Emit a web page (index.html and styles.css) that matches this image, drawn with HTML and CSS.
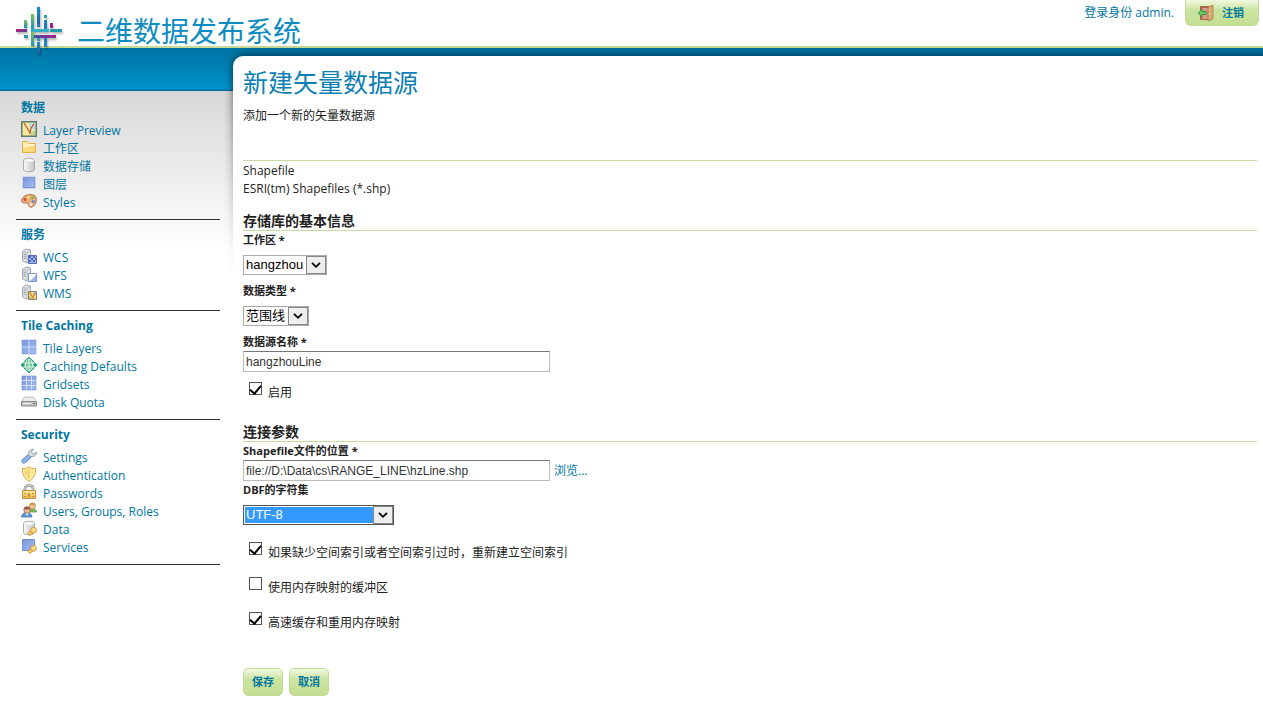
FILE: index.html
```html
<!DOCTYPE html>
<html lang="zh-CN">
<head>
<meta charset="utf-8">
<title>二维数据发布系统</title>
<link rel="stylesheet" href="styles.css">
</head>
<body>
<svg class="defs" width="0" height="0" aria-hidden="true">
  <defs>
    <linearGradient id="g-metal" x1="0" x2="1"><stop offset="0" stop-color="#fafafa"/><stop offset="1" stop-color="#c4c4c4"/></linearGradient>
    <linearGradient id="g-blue" x1="0" y1="0" x2="1" y2="1"><stop offset="0" stop-color="#7896dc"/><stop offset="1" stop-color="#a4bdf2"/></linearGradient>
    <linearGradient id="g-gold" x1="0" y1="0" x2="0" y2="1"><stop offset="0" stop-color="#fff0a8"/><stop offset="1" stop-color="#efb541"/></linearGradient>
    <linearGradient id="g-v" x1="0" y1="0" x2="0" y2="1"><stop offset="0" stop-color="#1a8fcb"/><stop offset="1" stop-color="#235a9c"/></linearGradient>
    <linearGradient id="g-h" x1="0" x2="1"><stop offset="0" stop-color="#3c53a0"/><stop offset="1" stop-color="#a3238e"/></linearGradient>
    <linearGradient id="g-m" x1="0" x2="1"><stop offset="0" stop-color="#b0237f"/><stop offset="1" stop-color="#5e3f9a"/></linearGradient>
    <linearGradient id="g-g" x1="0" y1="0" x2="0" y2="1"><stop offset="0" stop-color="#7cc35a"/><stop offset="1" stop-color="#1d93b8"/></linearGradient>
  </defs>
  <symbol id="server" viewBox="0 0 16 16">
    <path d="M1.500 3.500 5 1 9.500 2v11.500L6 15 1.500 13z" fill="#e1e4e8" stroke="#a3a9b1"/>
    <path d="M6 4.500V15M6 4.500 1.500 3.500M6 4.500 9.500 2" fill="none" stroke="#b4b9bf"/>
    <path d="M2.500 6 5 6.500M2.500 8 5 8.500M2.500 10l2.500.5" stroke="#959ca5"/>
  </symbol>
  <symbol id="cylinder" viewBox="0 0 16 16">
    <path d="M2.500 3.500v9c0 3 11 3 11 0v-9c0-3-11-3-11 0z" fill="url(#g-metal)" stroke="#aaa"/>
    <ellipse cx="8" cy="3.500" rx="5" ry="1.800" fill="#fff" stroke="#ccc" stroke-width=".6"/>
  </symbol>
  <symbol id="key" viewBox="0 0 16 16">
    <path d="M7.500 14.500 12 11" stroke="#cc9136" stroke-width="3.600"/>
    <path d="M8 14.200 12 11" stroke="#fbd476" stroke-width="2.200"/>
    <circle cx="12.500" cy="10.300" r="2.900" fill="#fbd476" stroke="#cc9136" stroke-width=".8"/>
    <circle cx="13.200" cy="9.700" r=".9" fill="#fff6d8"/>
  </symbol>
</svg>

<header class="header">
  <a class="brand" href="#">
    <svg class="logo" viewBox="0 0 48 48" aria-hidden="true">
      <rect x="21" y="2" width="3" height="18" fill="url(#g-v)"/>
      <rect x="15" y="9" width="3" height="15" fill="url(#g-g)"/>
      <rect x="28" y="10" width="3" height="3" fill="#2fa39f"/>
      <rect x="28" y="15" width="3" height="9" fill="#1f82bd"/>
      <rect x="8" y="15" width="3" height="8" fill="url(#g-g)"/>
      <rect x="34" y="18" width="3" height="5" fill="#a3238e"/>
      <rect x="0" y="24" width="11" height="3" fill="url(#g-m)"/>
      <rect x="15" y="24" width="18" height="3" fill="#37b0c4"/>
      <rect x="21" y="19" width="3" height="3" fill="#2b75b5"/>
      <rect x="34" y="24" width="12" height="3" fill="#2499b0"/>
      <rect x="8" y="30" width="4" height="3" fill="#2795b5"/>
      <rect x="17" y="30" width="23" height="3" fill="url(#g-h)"/>
      <rect x="15" y="27" width="3" height="14" fill="url(#g-g)"/>
      <rect x="28" y="33" width="3" height="9" fill="#1f82bd"/>
      <rect x="21" y="33" width="3" height="3" fill="#2499b0"/>
      <rect x="21" y="37" width="3" height="12" fill="url(#g-v)"/>
    </svg>
    <span class="brand-name">二维数据发布系统</span>
  </a>
  <div class="session">
    <span>登录身份 admin.</span>
    <button class="btn btn-logout" type="button">
      <svg class="icon" viewBox="0 0 16 16" aria-hidden="true">
        <path d="M2 1h11v14H2z" fill="#a5674a"/><path d="M4 3h7v11H4z" fill="#d49c86"/>
        <path d="M10 2l5-2v14l-5 2z" fill="#dcab72" stroke="#a5713d" stroke-width=".7"/>
        <circle cx="11.500" cy="9" r=".7" fill="#fff0b0"/>
        <path d="M0 8l4-4v2.500h4v3H4V12z" fill="#6fcb69" stroke="#2d8a3a" stroke-width=".8"/>
      </svg>
      注销
    </button>
  </div>
</header>

<div class="page">
  <nav class="sidebar">
    <section class="nav-group">
      <h2>数据</h2>
      <ul>
        <li><a href="#"><svg class="icon" viewBox="0 0 16 16"><path d="M.75.75h14.500v14.500H.75z" fill="#fae68f" stroke="#5a7a72" stroke-width="1.500"/><path d="M8 2h6v6l-4 1z" fill="#b5d6f3"/><path d="M10 10h4v4h-4z" fill="#a9d489"/><path d="M2 5h12M2 10h12M6 2v12M11 2v12" stroke="#fff" stroke-opacity=".5" stroke-width=".7"/><path d="M3 2l6 10 1-5 3-4" fill="none" stroke="#bb5f35" stroke-width="1.300"/></svg>Layer Preview</a></li>
        <li><a href="#"><svg class="icon" viewBox="0 0 16 16"><path d="M1.500 13.500v-11h5l1.500 2h6.500v9z" fill="#fce9a1" stroke="#e3b04c"/><path d="M2 7.500h4L7.500 6H14" fill="none" stroke="#fff8dd" stroke-width="1.500"/><path d="M2 8.500h4.500L8 7h6v6H2z" fill="#f9d97a"/></svg>工作区</a></li>
        <li><a href="#"><svg class="icon"><use href="#cylinder"/></svg>数据存储</a></li>
        <li><a href="#"><svg class="icon" viewBox="0 0 16 16"><path d="M1 1h14v13H1z" fill="#c9d7f5"/><path d="M2.500 2.500h11v10h-11z" fill="url(#g-blue)" stroke="#7f98d3"/></svg>图层</a></li>
        <li><a href="#"><svg class="icon" viewBox="0 0 16 16"><path d="M1 6c2-4 9-6 13-3 3 3 1 9-3 11-4 1-3-3-5-4C3 10-1 10 1 6z" fill="#e8ac7a" stroke="#b56d48"/><circle cx="4" cy="6.500" r="1.500" fill="#d7473e"/><circle cx="7.500" cy="4.200" r="1.500" fill="#f3e064"/><circle cx="11.500" cy="4.800" r="1.500" fill="#70b957"/><circle cx="12.300" cy="8.500" r="1.500" fill="#5d91d1"/><circle cx="10" cy="11.500" r="1.300" fill="#fff"/></svg>Styles</a></li>
      </ul>
    </section>
    <section class="nav-group">
      <h2>服务</h2>
      <ul>
        <li><a href="#"><svg class="icon" viewBox="0 0 16 16"><use href="#server"/><path d="M7.500 7.500h8v8h-8z" fill="#9fb4ec" stroke="#5a6eb5"/><path d="M8 8h2v2H8zM12 8h2v2h-2zM10 10h2v2h-2zM14 10h1v2h-1zM8 12h2v2H8zM12 12h2v2h-2z" fill="#4f68bd"/></svg>WCS</a></li>
        <li><a href="#"><svg class="icon" viewBox="0 0 16 16"><use href="#server"/><path d="M7.500 7.500h8v8h-8z" fill="#fff" stroke="#7a93cc"/><path d="M15 9v6H9z" fill="#9db7ec"/></svg>WFS</a></li>
        <li><a href="#"><svg class="icon" viewBox="0 0 16 16"><use href="#server"/><path d="M7.500 7.500h8v8h-8z" fill="#f4d66d" stroke="#8f836d"/><path d="M12 8h3v4z" fill="#91c8e4"/><path d="M8 12l3 3H8z" fill="#8bc36c"/><path d="M8.500 8l3 5 3-4M11.500 13l1 2" fill="none" stroke="#c06440"/></svg>WMS</a></li>
      </ul>
    </section>
    <section class="nav-group">
      <h2>Tile Caching</h2>
      <ul>
        <li><a href="#"><svg class="icon" viewBox="0 0 16 16"><path d="M1 1h14v14H1z" fill="url(#g-blue)"/><path d="M8 1v14M1 8h14" stroke="#d6e1fa"/><path d="M1 1h14v14H1z" fill="none" stroke="#7c97d8" stroke-width=".6"/></svg>Tile Layers</a></li>
        <li><a href="#"><svg class="icon" viewBox="0 0 16 16"><path d="M8 0l8 8-8 8-8-8z" fill="#2a9d90" stroke="#2a9d90"/><circle cx="8" cy="8" r="5.800" fill="#6cc79a" stroke="#238f80"/><path d="M2 6h12M2 10h12M8 2v12" stroke="#dff8e2"/><ellipse cx="8" cy="8" rx="3.500" ry="6" fill="none" stroke="#dff8e2"/></svg>Caching Defaults</a></li>
        <li><a href="#"><svg class="icon" viewBox="0 0 16 16"><path d="M1 1h14v14H1z" fill="url(#g-blue)"/><path d="M5.500 1v14M10.500 1v14M1 5.500h14M1 10.500h14" stroke="#d6e1fa"/><path d="M1 1h14v14H1z" fill="none" stroke="#6d88cc" stroke-width=".6"/></svg>Gridsets</a></li>
        <li><a href="#"><svg class="icon" viewBox="0 0 16 16"><path d="M.5 9l3-5h9l3 5z" fill="#ededed" stroke="#bbb"/><path d="M.5 8.500h15v4.500H.5z" fill="#c4c4c4" stroke="#8a8a8a"/><path d="M2 10.500h8" stroke="#ececec"/><path d="M12 10.500h2" stroke="#626262"/></svg>Disk Quota</a></li>
      </ul>
    </section>
    <section class="nav-group">
      <h2>Security</h2>
      <ul>
        <li><a href="#"><svg class="icon" viewBox="0 0 16 16"><path d="M3 13 8 8.500" stroke="#5a80bd" stroke-width="5" stroke-linecap="round"/><path d="M3 13 8 8.500" stroke="#8fb4e8" stroke-width="3.400" stroke-linecap="round"/><path d="M8 8C6.500 4 9 1 12.500 1L10.500 3.500l.5 2 2 .5 2.500-2C16 7.500 12 10 8 8z" fill="#d9dde0" stroke="#8b939b" stroke-width=".8"/></svg>Settings</a></li>
        <li><a href="#"><svg class="icon" viewBox="0 0 16 16"><path d="M1.500 2.500C4 3 6 2 8 .8 10 2 12 3 14.500 2.500 15 9 12 13 8 15.300 4 13 1 9 1.500 2.500z" fill="#fff0b7" stroke="#dda231"/><path d="M3.500 4.300C5 4.300 6.500 3.800 8 2.800V13C5 11 3.500 8 3.500 4.300z" fill="#f5cb5c"/><path d="M8 2.800C9.500 3.800 11 4.300 12.500 4.300c0 3.700-1.500 6.700-4.500 8.700z" fill="#fbdf80"/><path d="M6 4v7M10 4v7" stroke="#fff6cf" stroke-width=".8"/></svg>Authentication</a></li>
        <li><a href="#"><svg class="icon" viewBox="0 0 16 16"><path d="M4 8V4.500C4 .5 12 .5 12 4.500V8" fill="none" stroke="#858585" stroke-width="2.600"/><path d="M4 8V4.500C4 .5 12 .5 12 4.500V8" fill="none" stroke="#dcdcdc" stroke-width="1.200"/><path d="M1.500 6.500h13v8h-13z" fill="url(#g-gold)" stroke="#c18e3e"/><path d="M3 9.500h2M3 12.500h2M7.500 9.500h1v3h-1zM11 9.500h2M11 12.500h2" fill="none" stroke="#c88a38"/></svg>Passwords</a></li>
        <li><a href="#"><svg class="icon" viewBox="0 0 16 16"><path d="M8 10c0-4 7.500-4 7.500 0z" fill="#7cba58" stroke="#548a3d" stroke-width=".7"/><circle cx="11.500" cy="4" r="3" fill="#ecc690" stroke="#b08548" stroke-width=".7"/><path d="M8.500 3c0-3 6-3 6 0z" fill="#c99750"/><path d="M.5 15c0-6 10.500-6 10.500 0z" fill="#5b97da" stroke="#3a6db0" stroke-width=".7"/><path d="M4.500 11h3L6 14z" fill="#fff"/><circle cx="6" cy="8" r="3.200" fill="#edc29a" stroke="#9a6043" stroke-width=".7"/><path d="M2.800 7.500C2.500 3.500 9.500 3.500 9.200 7.500z" fill="#a35540"/></svg>Users, Groups, Roles</a></li>
        <li><a href="#"><svg class="icon" viewBox="0 0 16 16"><use href="#cylinder"/><use href="#key"/></svg>Data</a></li>
        <li><a href="#"><svg class="icon" viewBox="0 0 16 16"><path d="M1.500 1.500h12v11h-12z" fill="url(#g-blue)" stroke="#7790d0"/><use href="#key"/></svg>Services</a></li>
      </ul>
    </section>
  </nav>

  <main class="content">
    <h1>新建矢量数据源</h1>
    <p class="intro">添加一个新的矢量数据源</p>
    <form class="form">
      <div class="store-type">
        <p>Shapefile</p>
        <p>ESRI(tm) Shapefiles (*.shp)</p>
      </div>

      <h3>存储库的基本信息</h3>
      <div class="field spaced">
        <label for="workspace">工作区 *</label>
        <span class="select"><select id="workspace"><option>hangzhou</option></select><svg viewBox="0 0 18 18"><path d="M4.500 6.500 9 11l4.500-4.500"/></svg></span>
      </div>
      <div class="field spaced">
        <label for="datatype">数据类型 *</label>
        <span class="select"><select id="datatype"><option>范围线</option></select><svg viewBox="0 0 18 18"><path d="M4.500 6.500 9 11l4.500-4.500"/></svg></span>
      </div>
      <div class="field">
        <label for="name">数据源名称 *</label>
        <input class="text" id="name" type="text" value="hangzhouLine">
      </div>
      <div class="check"><input id="enabled" type="checkbox" checked><label for="enabled">启用</label></div>

      <h3>连接参数</h3>
      <div class="field">
        <label for="location">Shapefile文件的位置 *</label>
        <div class="inline"><input class="text" id="location" type="text" value="file://D:\Data\cs\RANGE_LINE\hzLine.shp"><a href="#">浏览...</a></div>
      </div>
      <div class="field spaced">
        <label for="charset">DBF的字符集</label>
        <span class="select focused"><select id="charset"><option>UTF-8</option></select><svg viewBox="0 0 18 18"><path d="M4.500 6.500 9 11l4.500-4.500"/></svg></span>
      </div>
      <div class="check"><input id="reindex" type="checkbox" checked><label for="reindex">如果缺少空间索引或者空间索引过时，重新建立空间索引</label></div>
      <div class="check"><input id="mmap" type="checkbox"><label for="mmap">使用内存映射的缓冲区</label></div>
      <div class="check"><input id="cache" type="checkbox" checked><label for="cache">高速缓存和重用内存映射</label></div>

      <div class="actions">
        <button class="btn" type="submit">保存</button>
        <button class="btn" type="button">取消</button>
      </div>
    </form>
  </main>
</div>
</body>
</html>
```

FILE: styles.css
```css
* {
  box-sizing: border-box;
}

body {
  margin: 0;
  background: #fff;
  color: #222;
  font: 12px/18px "Open Sans", "Noto Sans CJK SC", sans-serif;
}

h1, h2, h3, p, ul {
  margin: 0;
  padding: 0;
}

ul {
  list-style: none;
}

a {
  color: #0076a1;
  text-decoration: none;
}

.defs {
  position: absolute;
}

.header {
  display: flex;
  justify-content: space-between;
  align-items: flex-start;
  height: 48px;
  padding: 0 4px 0 16px;
  border-bottom: 2px solid #c5db96;
}

.brand {
  position: relative;
  z-index: 1;
  display: flex;
  gap: 13px;
  padding-top: 5px;
  color: #0c8cc0;
}

.logo {
  width: 48px;
  height: 48px;
  overflow: visible;
  filter: drop-shadow(1px 2px 1px rgba(0, 0, 0, .3));
}

.brand-name {
  padding-top: 6px;
  font-size: 28px;
  font-weight: 400;
  line-height: 40px;
}

.session {
  display: flex;
  gap: 11px;
  color: #0076a1;
}

.session span {
  padding-top: 4px;
}

.btn {
  display: inline-flex;
  align-items: center;
  gap: 8px;
  height: 28px;
  padding: 0 8px;
  border: 1px solid #c3dc98;
  border-radius: 5px;
  background: linear-gradient(#f1f8e2, #cbe4a0 40%, #c3df93);
  color: #0076a1;
  font: bold 11px/18px "Open Sans", "Noto Sans CJK SC", sans-serif;
}

.btn-logout {
  height: 26px;
  padding: 0 14px 0 12px;
  border-top: 0;
  border-radius: 0 0 6px 6px;
}

.icon {
  flex: none;
  width: 16px;
  height: 16px;
}

.page {
  position: relative;
  z-index: 0;
  display: flex;
  align-items: flex-start;
  background: linear-gradient(#0074a3, #0092cc 41px, #006f9f 42px, #006f9f 43px, #d8d8d8 43px, #fff 200px);
}

.sidebar {
  flex: none;
  width: 233px;
  padding: 45px 13px 0 16px;
}

.nav-group {
  padding: 5px 5px 8px;
  border-bottom: 1px solid #33332b;
}

.nav-group h2 {
  margin-bottom: 3px;
  color: #0076a1;
  font-size: 12px;
  line-height: 20px;
}

.nav-group a {
  display: flex;
  gap: 6px;
  height: 18px;
  line-height: 20px;
}

.content {
  position: relative;
  flex: 1;
  min-width: 0;
  margin-top: 8px;
  padding: 7px 6px 11px 10px;
  border-radius: 10px 0 0 0;
  background: #fff;
}

/* Soft shadow round the panel's corner, fading out down its left side */
.content::before {
  content: "";
  position: absolute;
  z-index: -1;
  top: 0;
  right: -20px;
  left: 0;
  height: 220px;
  border-radius: 10px 0 0 0;
  box-shadow: 0 0 10px rgba(0, 0, 0, .75);
  mask: linear-gradient(#000, transparent) -20px -20px / calc(100% + 40px) 240px no-repeat;
  mask-clip: no-clip;
}

.page {
  overflow-x: clip;
}

h1 {
  color: #0c7fb4;
  font-size: 25px;
  font-weight: 400;
  line-height: 38px;
}

.intro {
  margin-top: 6px;
}

.store-type {
  margin-top: 35px;
  padding-top: 1px;
  border-top: 1px solid #cbd9a4;
}

h3 {
  margin-top: 14px;
  border-bottom: 1px solid #cbd9a4;
  font-size: 14px;
  line-height: 18px;
}

.field {
  display: flex;
  flex-direction: column;
  align-items: flex-start;
}

.field label {
  font-size: 11px;
  font-weight: 700;
  line-height: 18px;
}

.field > .text,
.inline {
  margin-top: 0;
}

.spaced {
  gap: 6px;
  padding-bottom: 7px;
}

.select {
  display: inline-grid;
  grid-template-columns: 1fr 20px;
  height: 20px;
  border: 1px solid #aaa;
}

.select select {
  grid-area: 1 / 1 / 2 / 3;
  appearance: none;
  min-width: 0;
  padding: 0 22px 0 2px;
  border: 0;
  outline: 0;
  border-radius: 0;
  background: #fff;
  color: #000;
  font: 13px/18px "Liberation Sans", "Noto Sans CJK SC", sans-serif;
}

.select svg {
  grid-area: 1 / 2;
  width: 20px;
  height: 18px;
  border: 1px solid #888;
  background: #eee;
  fill: none;
  stroke: #000;
  stroke-width: 2;
  pointer-events: none;
}

.select.focused {
  width: 151px;
  border-color: #555;
}

.focused select {
  box-shadow: inset 0 0 0 1px #fff;
  background: #3399ff;
  color: #fff;
}

.text {
  width: 307px;
  height: 21px;
  padding: 0 2px;
  border: 1px solid #bbb;
  border-top-color: #777;
  background: #fff;
  color: #333;
  font: 12px/18px "Liberation Sans", "Noto Sans CJK SC", sans-serif;
}

.inline {
  display: flex;
  align-items: center;
  gap: 4px;
}

.check {
  display: flex;
  gap: 6px;
  height: 18px;
  margin: 10px 0 0 6px;
}

.check + .check {
  margin-top: 17px;
}

.check input {
  appearance: none;
  display: grid;
  place-items: center;
  flex: none;
  width: 13px;
  height: 13px;
  margin: 0;
  border: 1px solid #555;
  background: #fff;
}

.check input:checked::before {
  content: "";
  width: 5px;
  height: 9px;
  margin-bottom: 4px;
  border: solid #000;
  border-width: 0 2px 2px 0;
  transform: rotate(40deg);
}

.check label {
  line-height: 22px;
}

.check + h3 {
  margin-top: 23px;
}

.actions {
  display: flex;
  gap: 6px;
  margin-top: 38px;
}
```
